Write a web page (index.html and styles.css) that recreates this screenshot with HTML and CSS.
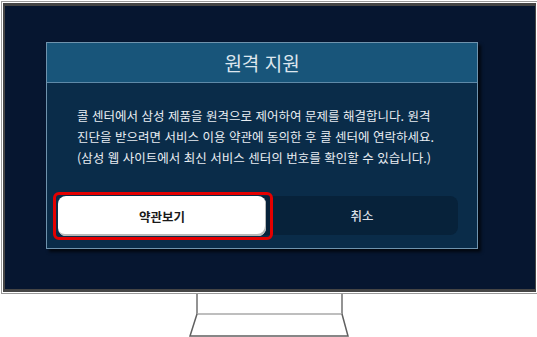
FILE: index.html
```html
<!DOCTYPE html>
<html lang="ko">
<head>
    <meta charset="UTF-8">
    <title>원격 지원</title>
    <link rel="stylesheet" href="styles.css">
</head>
<body>
    <div class="tv">
        <div class="screen">
            <div class="dialog">
                <div class="dialog-title">원격 지원</div>
                <div class="dialog-body">
                    <p class="message">
                        콜 센터에서 삼성 제품을 원격으로 제어하여 문제를 해결합니다. 원격<br>
                        진단을 받으려면 서비스 이용 약관에 동의한 후 콜 센터에 연락하세요.<br>
                        (삼성 웹 사이트에서 최신 서비스 센터의 번호를 확인할 수 있습니다.)
                    </p>
                    <div class="buttons">
                        <button class="btn btn-terms">약관보기<span class="highlight"></span></button>
                        <button class="btn btn-cancel">취소</button>
                    </div>
                </div>
            </div>
        </div>
    </div>

    <!-- stand -->
    <svg class="stand" width="537" height="44" viewBox="0 0 537 44">
        <path d="M197 0 V20 M342 0 V20" stroke="#707070" stroke-width="1.5" fill="none"/>
        <path d="M197 20 H342" stroke="#a8a8a8" stroke-width="1.5"/>
        <path d="M197 20 L190 42 H348 L342 20" stroke="#606060" stroke-width="1.5" fill="none"/>
    </svg>
</body>
</html>
```

FILE: styles.css
```css
body {
    margin: 0;
    background: white;
    font-family: "Noto Sans CJK KR", "Noto Sans", sans-serif;
}

.tv {
    margin: 1px 0 0 1px;
    width: 533px;
    height: 289px;
    border: 1px solid #9a9a9a;
    padding: 1px 2px 1px 1px;
    box-sizing: content-box;
}

.screen {
    height: 289px;
    background: #061630;
    border-style: solid;
    border-color: #454545;
    border-width: 3px 1px 3px 2px;
    padding: 36px 0 0 41px;
    box-sizing: border-box;
}

.dialog {
    width: 432px;
    height: 207px;
    box-sizing: border-box;
    border: 1px solid #6f93ad;
    background: #0a2c49;
    box-shadow: 3px 3px 3px rgba(0, 0, 0, 0.7);
}

.dialog-title {
    height: 39px;
    background: #18557a;
    border-bottom: 1px solid #5f8aa8;
    color: #dde6ee;
    font-size: 19px;
    line-height: 39px;
    text-align: center;
}

.dialog-body {
    padding: 22px 19px 0 11px;
}

.message {
    margin: 0 0 28px 19px;
    color: #e8edf2;
    font-size: 12.5px;
    line-height: 21px;
    white-space: nowrap;
}

.buttons {
    display: flex;
    height: 39px;
    background: #07223a;
    border-radius: 8px;
}

.btn {
    border: none;
    font-family: inherit;
    font-size: 12.5px;
    cursor: pointer;
    padding: 0;
}

.btn-terms {
    position: relative;
    width: 208px;
    height: 40px;
    background: white;
    color: #1a1a1a;
    font-weight: bold;
    border-radius: 8px;
    box-shadow: inset -1px -2px 0 #b8b8b8;
}

.highlight {
    position: absolute;
    top: -4px;
    left: -5px;
    right: -7px;
    bottom: -4px;
    border: 3px solid #e40000;
    border-radius: 6px;
}

.btn-cancel {
    flex: 1;
    background: transparent;
    color: #d8dee5;
    font-weight: 500;
}

.stand {
    display: block;
}
```
